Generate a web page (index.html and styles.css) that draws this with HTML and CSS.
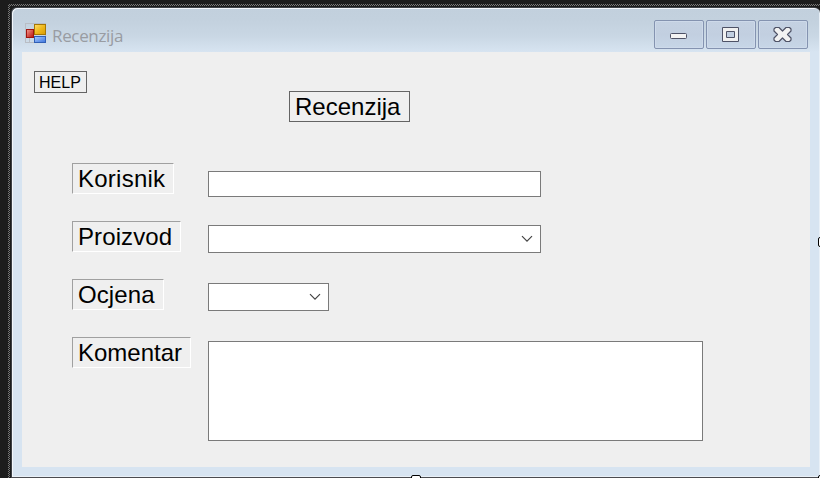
FILE: index.html
```html
<!DOCTYPE html>
<html lang="hr">
<head>
<meta charset="utf-8">
<title>Recenzija</title>
<link rel="stylesheet" href="styles.css">
</head>
<body>
<div class="selection">
  <div class="window">
    <header class="titlebar">
      <svg class="app-icon" width="22" height="22" viewBox="0 0 22 22" shape-rendering="crispEdges">
        <defs>
          <linearGradient id="gold" x1="0" y1="0" x2="1" y2="1"><stop offset="0" stop-color="#ffdf69"/><stop offset=".5" stop-color="#efb91d"/><stop offset="1" stop-color="#d89a00"/></linearGradient>
          <linearGradient id="red" x1="0" y1="0" x2="1" y2="1"><stop offset="0" stop-color="#f59a90"/><stop offset="1" stop-color="#b80f08"/></linearGradient>
          <linearGradient id="blue" x1="0" y1="0" x2="1" y2="1"><stop offset="0" stop-color="#a8ccff"/><stop offset="1" stop-color="#3c72dc"/></linearGradient>
        </defs>
        <path d="M.5.5h20v19H.5zM4.500 14v5M.5 14.500h9" fill="none" stroke="#b9bdc4"/>
        <rect x="9.500" y="1.500" width="11" height="10" fill="url(#gold)" stroke="#a57605"/>
        <rect x="1.500" y="6.500" width="7" height="8" fill="url(#red)" stroke="#a01510"/>
        <rect x="9.500" y="13.500" width="11" height="6" fill="url(#blue)" stroke="#315fb5"/>
      </svg>
      <span class="caption">Recenzija</span>
      <div class="buttons">
        <span class="button"><svg width="50" height="29" viewBox="0 0 50 29"><rect x="16.500" y="13.500" width="16" height="5" rx="1" fill="#f3f3f3" stroke="#4e5266"/></svg></span>
        <span class="button"><svg width="50" height="29" viewBox="0 0 50 29"><path d="M16.500 7.500h16v14h-16zM20.500 11.500v6h8v-6z" fill="#f0f0f0" fill-rule="evenodd" stroke="#4e5266"/></svg></span>
        <span class="button"><svg width="50" height="29" viewBox="0 0 50 29"><path d="M17.500 7.500h3.500l3.500 3.500 3.500-3.500h3.500l1.500 1.500v2L29.500 14.500l3.500 3.500v2l-1.500 1.500H28L24.500 18 21 21.500h-3.500L16 20v-2l3.500-3.500L16 11V9z" fill="#f2f2f2" stroke="#4e5266" stroke-width="1.200" stroke-linejoin="round"/></svg></span>
      </div>
    </header>
    <main class="client">
      <div class="help">HELP</div>
      <h1 class="heading">Recenzija</h1>
      <div class="form">
        <div class="row"><span class="label user">Korisnik</span><div class="field textbox"></div></div>
        <div class="row"><span class="label product">Proizvod</span><div class="field combo wide"><svg width="12" height="8" viewBox="0 0 12 8"><path d="M1 1.200l5 5 5-5" fill="none" stroke="#444" stroke-width="1.200"/></svg></div></div>
        <div class="row"><span class="label rating">Ocjena</span><div class="field combo narrow"><svg width="12" height="8" viewBox="0 0 12 8"><path d="M1 1.200l5 5 5-5" fill="none" stroke="#444" stroke-width="1.200"/></svg></div></div>
        <div class="row"><span class="label comment">Komentar</span><div class="field area"></div></div>
      </div>
    </main>
  </div>
</div>
<i class="handle bottom"></i>
<i class="handle right"></i>
<i class="handle corner"></i>
</body>
</html>
```
FILE: styles.css
```css
* { box-sizing: border-box; }
body {
  margin: 0;
  width: 820px;
  height: 478px;
  overflow: hidden;
  position: relative;
  background: #1c1c1c;
  font-family: "Liberation Sans", Arial, sans-serif;
}
.selection {
  margin: 4px 0 0 8px;
  width: 812px;
  height: 474px;
  padding: 3px 0 0 3px;
  background:
    linear-gradient(#1c1c1c, #1c1c1c) 2px 2px no-repeat,
    repeating-conic-gradient(#767676 0 25%, #1c1c1c 0 50%) 0 0 / 2px 2px;
}
.window {
  width: 809px;
  height: 471px;
  padding: 0 9px 0 9px;
  border: solid #3d4147;
  border-width: 1px 0 1px 1px;
  border-bottom-color: #4a4b50;
  border-radius: 6px 6px 0 0;
  background: linear-gradient(#c2d0dd, #c3d1de 12px, #c9d7e4 28px, #d7e4f1 44px, #d7e4f1);
  box-shadow: inset 1px 1px 0 #f2f6fa, inset -1px -1px 0 #e9f0f7;
}
.titlebar {
  display: flex;
  height: 44px;
  align-items: flex-start;
  padding: 12px 3px 0 4px;
}
.app-icon { margin-top: 3px; }
.caption {
  margin: 5px 0 0 5px;
  font: 17px/22px "Open Sans", "Noto Sans", sans-serif;
  letter-spacing: -.35px;
  color: #999ca2;
}
.buttons { display: flex; gap: 2px; margin-left: auto; }
.button {
  width: 50px;
  height: 29px;
  border: 1px solid #8493b0;
  border-radius: 2px;
  background: linear-gradient(#c4d1e2, #c2cfe0 50%, #c7d6e7);
  box-shadow: inset 0 0 0 1px #cedaea;
}
.button svg { display: block; margin: -1px; }
.client {
  width: 788px;
  height: 415px;
  margin-left: 1px;
  padding: 19px 0 0 12px;
  background: #efefef;
  color: #000;
}
.help {
  width: 53px;
  height: 22px;
  padding-left: 4px;
  border: 1px solid #646464;
  font-size: 16px;
  line-height: 21px;
}
.heading {
  width: 121px;
  height: 31px;
  margin: -2px 0 0 255px;
  padding-left: 5px;
  border: 1px solid #646464;
  font-size: 24px;
  font-weight: 400;
  line-height: 30px;
}
.form { margin: 41px 0 0 38px; }
.row { display: flex; height: 58px; align-items: flex-start; }
.label {
  height: 31px;
  padding-left: 5px;
  border: 1px solid;
  border-color: #a0a0a0 #fff #fff #a0a0a0;
  font-size: 24px;
  line-height: 30px;
}
.user { width: 102px; margin-right: 34px; letter-spacing: .25px; }
.product { width: 109px; margin-right: 27px; letter-spacing: .1px; }
.rating { width: 92px; margin-right: 44px; letter-spacing: .1px; }
.comment { width: 119px; margin-right: 17px; }
.field { margin-top: 4px; border: 1px solid #7a7a7a; background: #fff; }
.textbox { width: 333px; height: 26px; margin-top: 8px; }
.combo {
  display: flex;
  justify-content: flex-end;
  align-items: center;
  height: 28px;
  padding-right: 7px;
}
.wide { width: 333px; }
.narrow { width: 121px; }
.area { width: 495px; height: 100px; }
.handle { position: absolute; background: #fff; border: 1px solid #000; border-radius: 2px; }
.bottom { left: 411px; top: 475px; width: 10px; height: 10px; }
.right { left: 818px; top: 237px; width: 10px; height: 10px; }
.corner { left: 818px; top: 475px; width: 10px; height: 10px; }
```
